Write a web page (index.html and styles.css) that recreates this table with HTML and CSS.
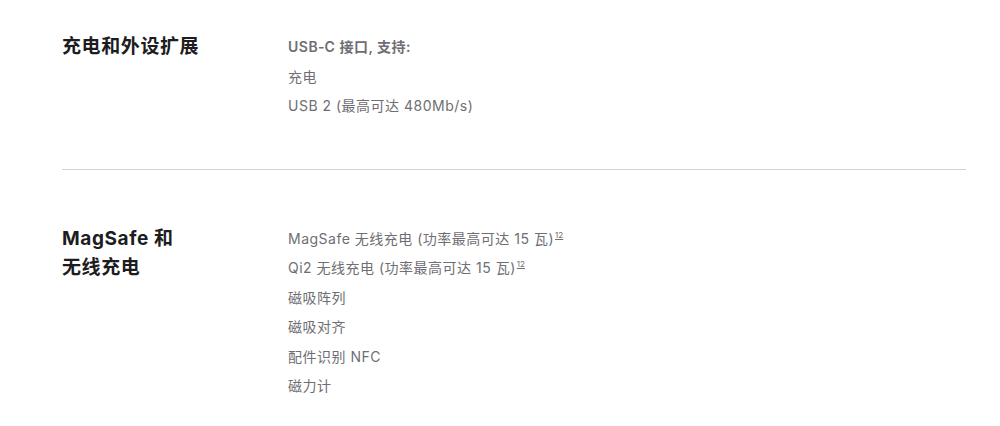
FILE: index.html
```html
<!DOCTYPE html>
<html lang="zh-CN">
<head>
<meta charset="utf-8">
<link rel="stylesheet" href="styles.css">
</head>
<body>
<main class="specs">
  <section class="spec spec-first">
    <h2 class="spec-title">充电和外设扩展</h2>
    <ul class="spec-list">
      <li class="strong">USB‑C 接口, 支持:</li>
      <li>充电</li>
      <li>USB 2 (最高可达 480Mb/s)</li>
    </ul>
  </section>
  <section class="spec spec-second">
    <h2 class="spec-title">MagSafe 和<br>无线充电</h2>
    <ul class="spec-list">
      <li>MagSafe 无线充电 (功率最高可达 15 瓦)<sup class="fn">12</sup></li>
      <li>Qi2 无线充电 (功率最高可达 15 瓦)<sup class="fn">12</sup></li>
      <li>磁吸阵列</li>
      <li>磁吸对齐</li>
      <li>配件识别 NFC</li>
      <li>磁力计</li>
    </ul>
  </section>
</main>
</body>
</html>
```
FILE: styles.css
```css
html, body {
  margin: 0;
  padding: 0;
  background: #fff;
}
body {
  font-family: Inter, "Noto Sans CJK SC", sans-serif;
  -webkit-font-smoothing: antialiased;
}
.specs {
  width: 904px;
  margin-left: 62px;
}
.spec {
  display: grid;
  grid-template-columns: 226px 1fr;
}
.spec-first {
  padding-top: 32px;
  padding-bottom: 48px;
  border-bottom: 1px solid #d2d2d7;
}
.spec-second {
  padding-top: 54px;
}
.spec-title {
  margin: 0;
  font-size: 19px;
  line-height: 29.5px;
  font-weight: 700;
  color: #1d1d1f;
  letter-spacing: 0.6px;
}
.spec-list {
  list-style: none;
  margin: 0;
  padding: 0;
  font-size: 14px;
  line-height: 29.5px;
  color: #6e6e73;
  letter-spacing: 0.5px;
}
.spec-list .strong {
  font-weight: 600;
}
.fn {
  font-size: 8px;
  line-height: 0;
  vertical-align: 6px;
  text-decoration: underline;
  margin-left: 1px;
  letter-spacing: 0;
}
```
